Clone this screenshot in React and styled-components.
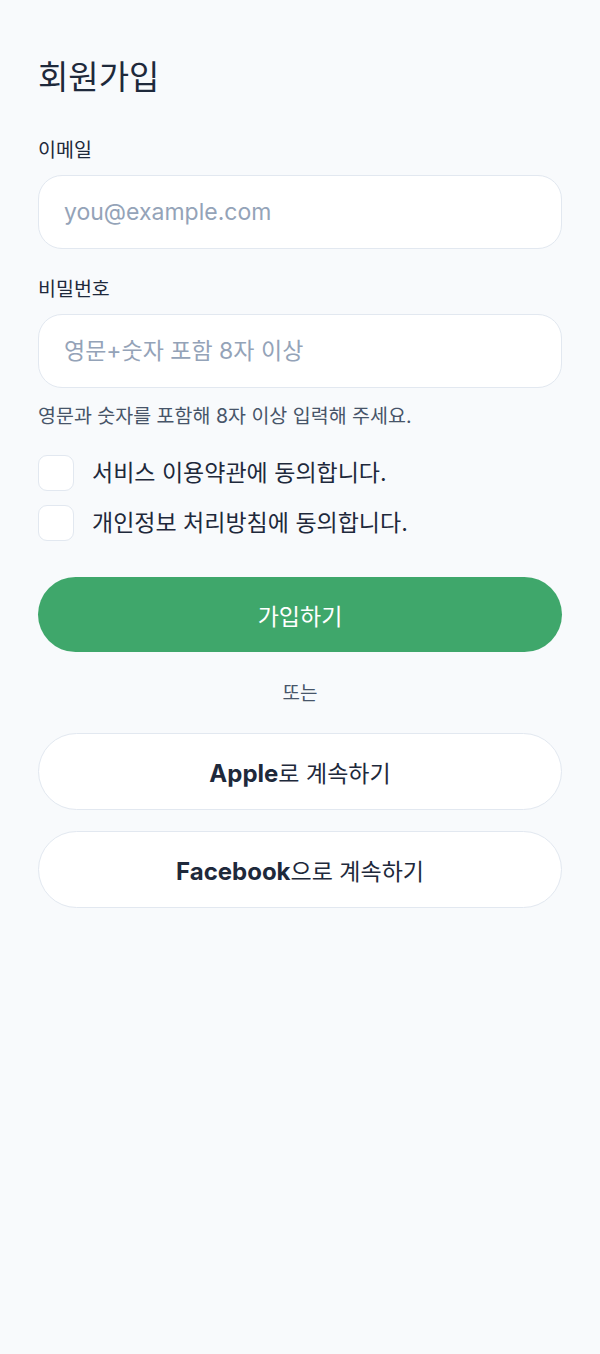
import styled, { createGlobalStyle } from "styled-components";

const GlobalStyle = createGlobalStyle`
  html, body {
    margin: 0;
    padding: 0;
    background: #f8fafc;
  }
  body {
    font-family: Inter, "Noto Sans CJK KR", sans-serif;
    color: #1e293b;
  }
  * { box-sizing: border-box; }
`;

const Page = styled.div`
  min-height: 1354px;
  padding: 57px 38px 0 38px;
  display: flex;
  flex-direction: column;
`;

const Title = styled.h1`
  margin: 0 0 40px;
  font-size: 33px;
  line-height: 40px;
  font-weight: 400;
  color: #1e293b;
`;

const Label = styled.label`
  display: block;
  font-size: 19.5px;
  line-height: 26px;
  margin-bottom: 12px;
  color: #1e293b;
`;

const Input = styled.input`
  width: 100%;
  height: 74px;
  border: 1.5px solid #e2e8f0;
  border-radius: 24px;
  background: #fff;
  padding: 0 25px;
  font-family: inherit;
  font-size: 23px;
  color: #1e293b;
  outline: none;
  margin-bottom: ${(p) => p.$gap || 0}px;

  &::placeholder {
    color: #94a3b8;
  }
`;

const Helper = styled.p`
  margin: 16px 0 27px;
  font-size: 19.5px;
  line-height: 24px;
  color: #475569;
`;

const CheckList = styled.div`
  display: flex;
  flex-direction: column;
  gap: 14px;
  margin-bottom: 36px;
`;

const CheckRow = styled.label`
  display: flex;
  align-items: center;
  gap: 18px;
  font-size: 23px;
  line-height: 35px;
  color: #1e293b;
`;

const Box = styled.span`
  width: 36px;
  height: 36px;
  border: 1.5px solid #e2e8f0;
  border-radius: 9px;
  background: #fff;
  flex-shrink: 0;
`;

const PrimaryButton = styled.button`
  width: 100%;
  height: 75px;
  border: none;
  border-radius: 38px;
  background: #3fa76b;
  color: #fff;
  font-family: inherit;
  font-size: 23px;
  cursor: pointer;
`;

const Divider = styled.div`
  text-align: center;
  font-size: 19px;
  line-height: 24px;
  color: #475569;
  margin: 30px 0 27px;
`;

const SocialList = styled.div`
  display: flex;
  flex-direction: column;
  gap: 21px;
`;

const SocialButton = styled.button`
  width: 100%;
  height: 77px;
  border: 1.5px solid #e2e8f0;
  border-radius: 39px;
  background: #fff;
  color: #1e293b;
  font-family: inherit;
  font-size: 23px;
  cursor: pointer;

  b {
    font-weight: 700;
    font-size: 24px;
  }
`;

export default function App() {
  return (
    <>
      <GlobalStyle />
      <Page>
        <Title>회원가입</Title>
        <Label>이메일</Label>
        <Input placeholder="you@example.com" $gap={27} />
        <Label>비밀번호</Label>
        <Input placeholder="영문+숫자 포함 8자 이상" />
        <Helper>영문과 숫자를 포함해 8자 이상 입력해 주세요.</Helper>
        <CheckList>
          <CheckRow>
            <Box />
            서비스 이용약관에 동의합니다.
          </CheckRow>
          <CheckRow>
            <Box />
            개인정보 처리방침에 동의합니다.
          </CheckRow>
        </CheckList>
        <PrimaryButton>가입하기</PrimaryButton>
        <Divider>또는</Divider>
        <SocialList>
          <SocialButton>
            <b>Apple</b>로 계속하기
          </SocialButton>
          <SocialButton>
            <b>Facebook</b>으로 계속하기
          </SocialButton>
        </SocialList>
      </Page>
    </>
  );
}
